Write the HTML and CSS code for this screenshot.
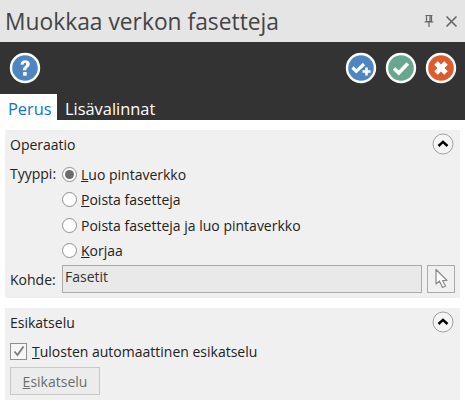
FILE: index.html
```html
<!DOCTYPE html>
<html lang="fi">
<head>
<meta charset="utf-8">
<title>Muokkaa verkon fasetteja</title>
<link rel="stylesheet" href="styles.css">
</head>
<body>
<header class="titlebar">
  <h1 class="title">Muokkaa verkon fasetteja</h1>
  <div class="winbtns">
    <svg class="pin" width="14" height="14" viewBox="0 0 14 14"><path d="M3.500 1.500h7M4.500 1.500v6h5v-6M8 2v5M2.500 8h9M7 8v5" fill="none" stroke="#666" stroke-width="1.200"/></svg>
    <svg class="close" width="13" height="13" viewBox="0 0 13 13"><path d="M1.500 1.500l10 10M11.500 1.500l-10 10" stroke="#666" stroke-width="1.600"/></svg>
  </div>
</header>
<div class="toolbar">
  <svg class="round" width="32" height="32" viewBox="0 0 32 32"><circle cx="16" cy="16" r="14" fill="#4d86c1" stroke="#fff" stroke-width="2.400"/><path d="M11.500 12.500c.3-3 2.400-4.300 4.700-4.300 2.700 0 4.600 1.600 4.600 3.900 0 3.400-3.600 3.300-3.600 6.100h-3.300c0-4 3.300-4 3.300-5.800 0-.9-.5-1.400-1.200-1.400-.9 0-1.300.6-1.500 1.800z" fill="#fff"/><rect x="14" y="20" width="3.800" height="3.800" rx=".8" fill="#fff"/></svg>
  <div class="actions">
    <svg class="round" width="32" height="32" viewBox="0 0 32 32"><circle cx="16" cy="16" r="14" fill="#4d86c1" stroke="#fff" stroke-width="2.400"/><path d="M7.500 15.500l3.800 3.800 7.700-7.300" fill="none" stroke="#fff" stroke-width="3.200"/><path d="M21.500 15.500v8M17.500 19.500h8" stroke="#fff" stroke-width="2.600"/></svg>
    <svg class="round" width="32" height="32" viewBox="0 0 32 32"><circle cx="16" cy="16" r="14" fill="#68a78f" stroke="#fff" stroke-width="2.400"/><path d="M9 16.500l4.800 4.500 9-9.500" fill="none" stroke="#fff" stroke-width="3.600"/></svg>
    <svg class="round" width="32" height="32" viewBox="0 0 32 32"><circle cx="16" cy="16" r="14" fill="#dd5c2f" stroke="#fff" stroke-width="2.400"/><path d="M11 11l10 10M21 11l-10 10" stroke="#fff" stroke-width="5"/></svg>
  </div>
</div>
<nav class="tabs">
  <span class="tab active">Perus</span>
  <span class="tab">Lisävalinnat</span>
</nav>
<main class="content">
  <section class="group op">
    <div class="group-head">
      <span>Operaatio</span>
      <svg class="collapse" width="22" height="22" viewBox="0 0 22 22"><circle cx="11" cy="11" r="10" fill="#f4f4f4" stroke="#a0a0a0"/><path d="M6.500 13L11 8.800 15.500 13" fill="none" stroke="#000" stroke-width="2.400"/></svg>
    </div>
    <div class="type-row">
      <span class="label">Tyyppi:</span>
      <div class="radios">
        <div class="radio-row"><span class="radio on"></span><span><u>L</u>uo pintaverkko</span></div>
        <div class="radio-row"><span class="radio"></span><span><u>P</u>oista fasetteja</span></div>
        <div class="radio-row"><span class="radio"></span><span>Poista fasetteja <u>j</u>a luo pintaverkko</span></div>
        <div class="radio-row"><span class="radio"></span><span><u>K</u>orjaa</span></div>
      </div>
    </div>
    <div class="target-row">
      <span class="label">Kohde:</span>
      <div class="input">Fasetit</div>
      <div class="pick">
        <svg width="16" height="22" viewBox="0 0 16 22"><path d="M3 1.500v14.500l3.500-3 3 6.500 3-1.500-3-5.500h4.500z" fill="#fff" stroke="#8a8a8a" stroke-width="1.200" stroke-linejoin="round"/></svg>
      </div>
    </div>
  </section>
  <section class="group preview">
    <div class="group-head">
      <span>Esikatselu</span>
      <svg class="collapse" width="22" height="22" viewBox="0 0 22 22"><circle cx="11" cy="11" r="10" fill="#f4f4f4" stroke="#a0a0a0"/><path d="M6.500 13L11 8.800 15.500 13" fill="none" stroke="#000" stroke-width="2.400"/></svg>
    </div>
    <div class="check-row">
      <span class="check"><svg width="14" height="14" viewBox="0 0 14 14"><path d="M2.500 7.500l3 3.500 6-8.500" fill="none" stroke="#7a7a7a" stroke-width="1.800"/></svg></span>
      <span><u>T</u>ulosten automaattinen esikatselu</span>
    </div>
    <div class="btn"><span><u>E</u>sikatselu</span></div>
  </section>
</main>
</body>
</html>
```

FILE: styles.css
```css
* { box-sizing: border-box; }
html, body { margin: 0; padding: 0; }
body {
  width: 465px;
  height: 402px;
  overflow: hidden;
  background: #fff;
  color: #222;
  font-family: "Open Sans", "Noto Sans", sans-serif;
  font-size: 14px;
}
.titlebar {
  height: 42px;
  background: #e5e5e5;
  display: flex;
  align-items: center;
  justify-content: space-between;
  padding: 0 7px 0 5px;
}
.title {
  margin: 0;
  font-size: 22.8px;
  font-weight: 400;
  color: #444;
}
.winbtns { display: flex; align-items: center; gap: 9px; }
.toolbar {
  height: 52px;
  background: #333;
  display: flex;
  align-items: center;
  justify-content: space-between;
  padding: 0 8px 0 9px;
}
.actions { display: flex; gap: 8px; }
.round { display: block; }
.tabs {
  height: 26px;
  background: #333;
  display: flex;
}
.tab {
  color: #fff;
  font-size: 16.4px;
  line-height: 30px;
  padding: 0 8px;
}
.tab.active {
  width: 57px;
  background: #fff;
  color: #0e74c8;
}
.content {
  padding: 10px 5px 0;
  display: flex;
  flex-direction: column;
  gap: 10px;
}
.group {
  width: 455px;
  background: #f0f0f0;
  padding: 0 5px;
}
.op { height: 168px; }
.preview { height: 92px; }
.group-head {
  height: 28px;
  display: flex;
  align-items: center;
  justify-content: space-between;
  padding-right: 1px;
}
.collapse { display: block; }
.type-row { display: flex; margin-top: 5px; }
.label { width: 52px; flex: none; }
.radios { display: flex; flex-direction: column; }
.radio-row {
  height: 25.3px;
  display: flex;
  align-items: center;
  gap: 4px;
  margin-top: -1px;
  margin-bottom: 1px;
}
.type-row .label { line-height: 22px; }
.radio {
  width: 15px;
  height: 15px;
  border: 1px solid #8f8f8f;
  border-radius: 50%;
  background: #fff;
  position: relative;
  flex: none;
}
.radio.on::after {
  content: "";
  position: absolute;
  inset: 2px;
  border-radius: 50%;
  background: #6d6d6d;
}
.target-row { display: flex; align-items: center; margin-top: 1px; }
.input {
  width: 364px;
  height: 28px;
  border: 1px solid #ababab;
  background: #e9e9e9;
  color: #333;
  padding-left: 2px;
  line-height: 22px;
  margin-left: 5px;
  margin-right: 5px;
}
.target-row .label { width: 47px; }
.pick {
  width: 28px;
  height: 28px;
  border: 1px solid #ababab;
  background: #f0f0f0;
  display: flex;
  align-items: center;
  justify-content: center;
}
.check-row { display: flex; align-items: center; gap: 5px; height: 24px; margin-top: 3px; }
.check {
  width: 17px;
  height: 17px;
  border: 1px solid #8f8f8f;
  background: #f6f6f6;
  display: flex;
  align-items: center;
  justify-content: center;
}
.btn {
  width: 90px;
  height: 28px;
  margin-top: 4px;
  border: 1px solid #c8c8c8;
  background: #ececec;
  color: #6d6d6d;
  display: flex;
  align-items: center;
  justify-content: center;
}
```
